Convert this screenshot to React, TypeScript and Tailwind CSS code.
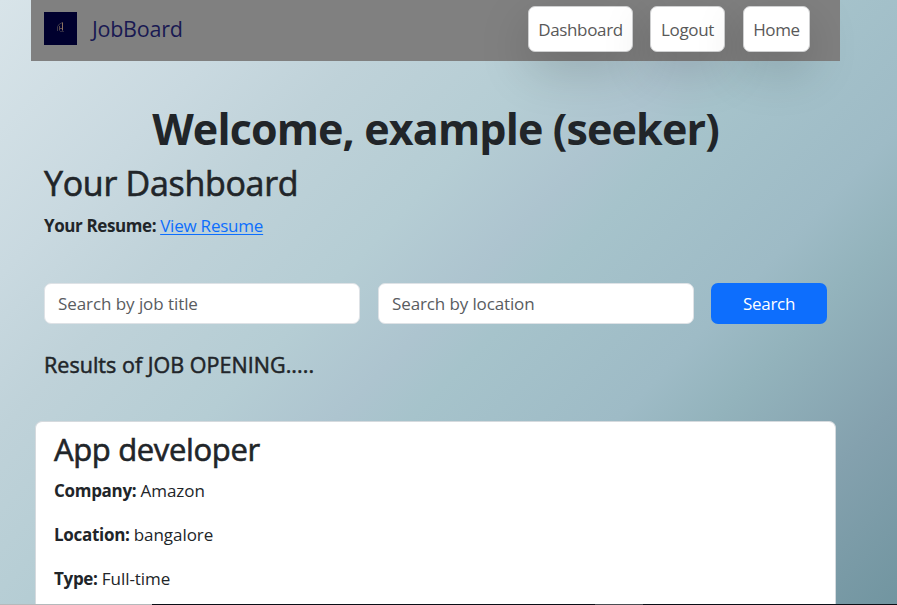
import React from "react";

const navItems = [
  { label: "Dashboard", box: "w-[105px]" },
  { label: "Logout", box: "ml-[17px] w-[75px]" },
  { label: "Home", box: "ml-[18px] w-[67px]" },
];

const details = [
  { name: "Company:", value: "Amazon" },
  { name: "Location:", value: "bangalore" },
  { name: "Type:", value: "Full-time" },
];

function Logo() {
  return (
    <svg className="h-[33px] w-[33px]" viewBox="0 0 33 33" fill="none">
      <rect width="33" height="33" fill="#00002e" />
      <path d="M13.5 19V14.5L15.5 12L18.5 10.5" stroke="#3f3a4a" strokeWidth="1" />
      <path d="M18.5 10.5V18.5" stroke="#8f7360" strokeWidth="1" />
      <path d="M15.5 14V18.5M16 16.5H18" stroke="#5a4b4e" strokeWidth="1" />
      <path d="M16 19.5H20" stroke="#302b42" strokeWidth="1" />
    </svg>
  );
}

export default function App() {
  return (
    <div className="flex h-[605px] w-full flex-col overflow-hidden bg-[linear-gradient(134deg,#d8e4e9_0%,#c9d9e0_18%,#bfd2d9_28%,#b5cdd4_41%,#adc4cf_50%,#a6c3cb_55%,#9ebbc6_69%,#93b3bc_75.5%,#84a1ae_87%,#7195a0_100%)] font-['Open_Sans','Noto_Sans',sans-serif] text-[#212529]">
      <div className="ml-[31px] flex h-[604px] w-[809px] shrink-0 flex-col">
        <nav className="flex h-[61px] shrink-0 items-start justify-between bg-[#808080] pl-[13px] pr-[30px]">
          <div className="flex items-center gap-[15px] pt-3">
            <Logo />
            <span className="text-[21.5px] leading-[33px] tracking-[-0.25px] text-[#191952]">JobBoard</span>
          </div>
          <div className="flex pt-1.5">
            {navItems.map((item) => (
              <a
                key={item.label}
                className={`${item.box} flex h-[46px] items-center justify-center rounded-[7px] border border-[#cfd0d1] bg-white pt-px text-[17px] tracking-[-0.35px] text-[#595959] shadow-[0_17px_50px_rgba(0,0,0,0.175)]`}
              >
                {item.label}
              </a>
            ))}
          </div>
        </nav>

        <main className="flex flex-1 flex-col">
          <h1 className="mt-[41px] text-center text-[43px] leading-[53px] font-bold tracking-[-0.86px] whitespace-nowrap">
            Welcome, example (seeker)
          </h1>
          <section className="px-[13px]">
            <h2 className="mt-[7px] text-[34px] leading-[42px] tracking-[-0.3px] [-webkit-text-stroke:0.6px]">Your Dashboard</h2>
            <p className="mt-[9px] text-[17px] leading-[26px] tracking-[-0.4px]">
              <strong>Your Resume:</strong>{" "}
              <a className="tracking-[-0.22px] text-[#0d6efd] underline decoration-1 underline-offset-2">View Resume</a>
            </p>
            <form className="mt-[44px] flex">
              <input
                placeholder="Search by job title"
                className="h-[41px] w-[316px] rounded-[7px] border border-[#dee2e6] bg-white px-[13px] text-[17px] tracking-[-0.07px] placeholder:text-[#595c5f]"
              />
              <input
                placeholder="Search by location"
                className="ml-[18px] h-[41px] w-[316px] rounded-[7px] border border-[#dee2e6] bg-white px-[13px] text-[17px] tracking-[-0.12px] placeholder:text-[#595c5f]"
              />
              <button
                type="button"
                className="ml-[17px] h-[41px] w-[116px] rounded-[7px] bg-[#0d6efd] text-[17px] tracking-[-0.3px] text-white"
              >
                Search
              </button>
            </form>
            <h5 className="mt-[28px] text-[21.5px] leading-[26px] tracking-[0.03px] [-webkit-text-stroke:0.5px]">
              Results of JOB OPENING.....
            </h5>
          </section>
          <article className="mt-[43px] ml-[4px] w-[801px] flex-1 rounded-t-[7px] border border-b-0 border-[#d5dade] bg-white px-[18px] pt-[9px]">
            <h3 className="text-[31px] leading-[37px] tracking-[-0.35px] [-webkit-text-stroke:0.6px]">App developer</h3>
            <div className="mt-[10px] flex flex-col gap-[18px]">
              {details.map((d) => (
                <p key={d.name} className="text-[17px] leading-[26px] tracking-[-0.3px]">
                  <strong>{d.name}</strong> <span className="tracking-[-0.05px]">{d.value}</span>
                </p>
              ))}
            </div>
          </article>
        </main>
      </div>
      <div className="flex h-px shrink-0 bg-[#0b0e16]">
        <div className="w-[152px] bg-[#b4b9bb]" />
        <div className="ml-[443px] w-[48px] bg-[#4b4d53]" />
      </div>
    </div>
  );
}
